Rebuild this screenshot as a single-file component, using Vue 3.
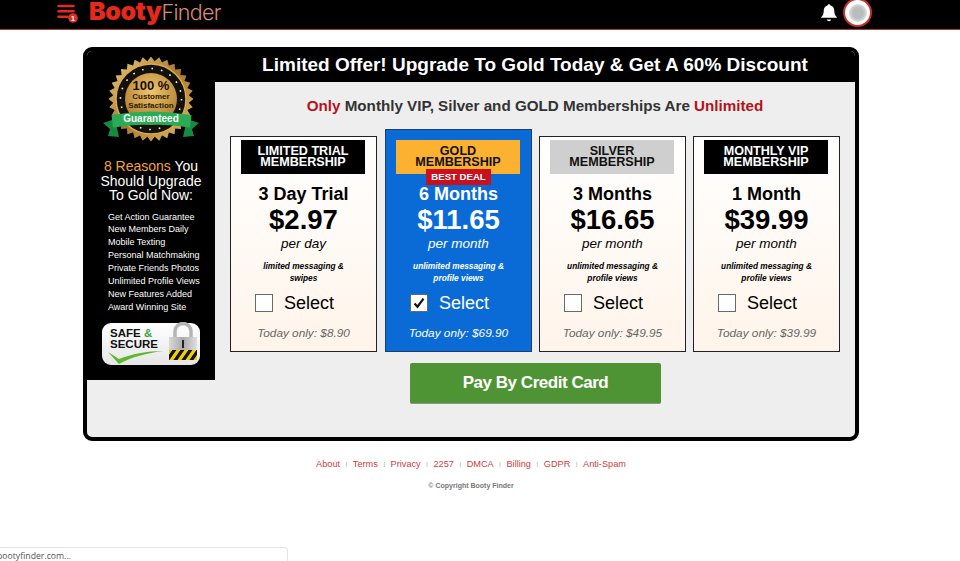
<template>
  <div class="page">
    <header class="topbar">
      <div class="brand">
        <span class="menu-icon">
          <svg width="22" height="20" viewBox="0 0 22 20">
            <path d="M1.500 3h15M1.500 8.300h15M1.500 13.700h9" stroke="#e5291b" stroke-width="2.600" stroke-linecap="round" fill="none" />
            <circle cx="16" cy="15" r="4.800" fill="#d9302a" />
            <text x="16" y="17.500" class="menu-count">1</text>
          </svg>
        </span>
        <span class="logo"><b>Booty</b><i>Finder</i></span>
      </div>
      <div class="user">
        <svg class="bell" width="18" height="19" viewBox="0 0 18 19">
          <path d="M9 1.200c.9 0 1.400.6 1.500 1.300 2.600.6 3.800 2.800 3.800 5.400 0 3 .8 4.600 2.500 6.100v.8H1.200V14c1.700-1.500 2.500-3.100 2.500-6.100 0-2.600 1.200-4.800 3.800-5.400C7.600 1.800 8.100 1.200 9 1.200z" fill="#fff" />
          <path d="M7 16.500h4c0 1-.9 1.700-2 1.700s-2-.7-2-1.700z" fill="#fff" />
        </svg>
        <span class="avatar"><span class="avatar-dot"></span></span>
      </div>
    </header>

    <main class="offer">
      <div class="side-col">
        <aside class="sidebar">
          <svg class="seal" width="100" height="90" viewBox="0 0 100 90">
            <defs>
              <linearGradient id="gold" x1="0" y1="0" x2="1" y2="1">
                <stop offset="0" stop-color="#f0cf7d" />
                <stop offset="0.5" stop-color="#a8772c" />
                <stop offset="1" stop-color="#e8c068" />
              </linearGradient>
              <radialGradient id="core" cx="0.5" cy="0.35" r="0.7">
                <stop offset="0" stop-color="#f0c66d" />
                <stop offset="1" stop-color="#a8762a" />
              </radialGradient>
            </defs>
            <polygon :points="sealPoints" fill="url(#gold)" />
            <circle cx="50" cy="42" r="35" fill="#14110c" stroke="#d9ab55" stroke-width="1.500" />
            <circle cx="50" cy="42" r="30.500" fill="none" stroke="#fff" stroke-width="1.600" stroke-dasharray="1.600 8" />
            <circle cx="50" cy="42" r="26" fill="url(#core)" />
            <text x="50" y="33" class="seal-big">100 %</text>
            <text x="50" y="42" class="seal-small">Customer</text>
            <text x="50" y="50.700" class="seal-small">Satisfaction</text>
            <polygon points="2,66 14,62 18,80 7,79 9,72" fill="#178a41" />
            <polygon points="98,66 86,62 82,80 93,79 91,72" fill="#178a41" />
            <path d="M10.500 58Q50 51 90.500 58L89 70.500Q50 64.500 12 70.500z" fill="#2cab57" />
            <text x="50" y="65" class="seal-ribbon">Guaranteed</text>
          </svg>

          <h2 class="reasons"><span>8 Reasons</span> You Should Upgrade To Gold Now:</h2>
          <ul class="reason-list">
            <li v-for="item in reasons" :key="item">{{ item }}</li>
          </ul>

          <div class="safe">
            <div class="safe-text">
              <div>SAFE <em>&amp;</em></div>
              <div>SECURE</div>
              <svg width="56" height="14" viewBox="0 0 56 14" class="safe-tick">
                <path d="M0 2l11 7C24 4 38 1 56 1 38 3 24 7 11 14z" fill="#5cb82c" />
              </svg>
            </div>
            <svg class="padlock" width="30" height="38" viewBox="0 0 30 38">
              <defs>
                <linearGradient id="steel" x1="0" y1="0" x2="1" y2="0">
                  <stop offset="0" stop-color="#d9d9d9" />
                  <stop offset="0.5" stop-color="#a9a9a9" />
                  <stop offset="1" stop-color="#e0e0e0" />
                </linearGradient>
                <pattern id="hazard" width="8" height="8" patternUnits="userSpaceOnUse" patternTransform="skewX(-35)">
                  <rect width="8" height="8" fill="#efd000" />
                  <rect width="4" height="8" fill="#111" />
                </pattern>
              </defs>
              <path d="M7 16V9.500a8 8 0 0 1 16 0V16" fill="none" stroke="#b5b5b5" stroke-width="3.500" />
              <rect x="1" y="15" width="28" height="23" fill="url(#steel)" />
              <rect x="14" y="18" width="2" height="8" fill="#222" />
              <rect x="1" y="28" width="28" height="10" fill="url(#hazard)" />
            </svg>
          </div>
        </aside>
      </div>

      <section class="content">
        <h1 class="headline">Limited Offer! Upgrade To Gold Today &amp; Get A 60% Discount</h1>
        <p class="subline"><span>Only</span> Monthly VIP, Silver and GOLD Memberships Are <span>Unlimited</span></p>

        <div class="plans">
          <label v-for="plan in plans" :key="plan.name" class="plan" :class="{ selected: plan.selected }">
            <div class="plan-name" :class="plan.tone">{{ plan.name }}<br />MEMBERSHIP</div>
            <span v-if="plan.selected" class="deal">BEST DEAL</span>
            <div class="term">{{ plan.term }}</div>
            <div class="price">{{ plan.price }}</div>
            <div class="per">{{ plan.per }}</div>
            <div class="desc">{{ plan.desc }}<br />{{ plan.desc2 }}</div>
            <div class="pick">
              <span class="box">
                <svg v-if="plan.selected" width="14" height="14" viewBox="0 0 14 14">
                  <path d="M2.500 7.500l3 3.200 6-8" fill="none" stroke="#111" stroke-width="2.200" />
                </svg>
              </span>
              <span class="pick-label">Select</span>
            </div>
            <div class="today">Today only: {{ plan.today }}</div>
          </label>
        </div>

        <button class="pay">Pay By Credit Card</button>
      </section>
    </main>

    <footer class="footer">
      <nav class="links">
        <template v-for="(link, i) in links" :key="link">
          <span v-if="i" class="sep">|</span>
          <a>{{ link }}</a>
        </template>
      </nav>
      <p class="copyright">© Copyright Booty Finder</p>
    </footer>

    <div class="status">bootyfinder.com...</div>
  </div>
</template>

<script setup>
const reasons = [
  'Get Action Guarantee',
  'New Members Daily',
  'Mobile Texting',
  'Personal Matchmaking',
  'Private Friends Photos',
  'Unlimited Profile Views',
  'New Features Added',
  'Award Winning Site'
]

const plans = [
  { name: 'LIMITED TRIAL', tone: 'dark', term: '3 Day Trial', price: '$2.97', per: 'per day', desc: 'limited messaging &', desc2: 'swipes', today: '$8.90' },
  { name: 'GOLD', tone: 'gold', term: '6 Months', price: '$11.65', per: 'per month', desc: 'unlimited messaging &', desc2: 'profile views', today: '$69.90', selected: true },
  { name: 'SILVER', tone: 'silver', term: '3 Months', price: '$16.65', per: 'per month', desc: 'unlimited messaging &', desc2: 'profile views', today: '$49.95' },
  { name: 'MONTHLY VIP', tone: 'dark', term: '1 Month', price: '$39.99', per: 'per month', desc: 'unlimited messaging &', desc2: 'profile views', today: '$39.99' }
]

const links = ['About', 'Terms', 'Privacy', '2257', 'DMCA', 'Billing', 'GDPR', 'Anti-Spam']

// starburst edge of the gold seal
const sealPoints = Array.from({ length: 64 }, (_, i) => {
  const r = i % 2 ? 38 : 42.5
  const a = (i / 64) * Math.PI * 2
  return `${(50 + r * Math.cos(a)).toFixed(1)},${(42 + r * Math.sin(a)).toFixed(1)}`
}).join(' ')
</script>

<style>
html,
body {
  margin: 0;
  background: #fff;
  overflow: hidden;
}
</style>

<style scoped>
.page {
  position: relative;
  height: 561px;
  overflow: hidden;
  font-family: 'Liberation Sans', Arial, sans-serif;
  color: #000;
}

.topbar {
  height: 29px;
  background: #000;
  border-bottom: 1px solid #a5392f;
  display: flex;
  justify-content: space-between;
  padding: 0 88px 0 57px;
  overflow: hidden;
}

.brand {
  display: flex;
  gap: 10px;
  align-items: flex-start;
}

.menu-icon {
  margin-top: 3px;
  height: 20px;
}

.menu-count {
  font: bold 7px 'Liberation Sans', sans-serif;
  fill: #fff;
  text-anchor: middle;
}

.logo {
  font-family: Inter, 'Liberation Sans', sans-serif;
  font-size: 25px;
  line-height: 22px;
  white-space: nowrap;
}

.logo b {
  color: #e5291b;
  font-weight: 900;
  letter-spacing: -0.4px;
}

.logo i {
  color: #d9897a;
  font-style: normal;
  font-size: 21.500px;
  font-weight: 300;
  letter-spacing: -0.7px;
}

.user {
  display: flex;
  align-items: flex-start;
  gap: 5px;
}

.bell {
  margin-top: 3px;
}

.avatar {
  width: 25px;
  height: 25px;
  margin-top: -2px;
  border: 2px solid #c8312a;
  border-radius: 50%;
  background: #fff;
  display: flex;
  align-items: center;
  justify-content: center;
}

.avatar-dot {
  width: 18px;
  height: 18px;
  border-radius: 50%;
  background: radial-gradient(circle, #b9bdbd 0 40%, #dfe2e2 75%, #f4f5f5 100%);
}

.offer {
  width: 768px;
  height: 386px;
  margin: 17px 0 0 83px;
  border: 4px solid #000;
  border-radius: 9px;
  background: #eee;
  display: flex;
  overflow: hidden;
}

.side-col {
  width: 128px;
  flex: none;
}

.sidebar {
  height: 329px;
  background: #000;
  color: #fff;
  display: flex;
  flex-direction: column;
  align-items: center;
  padding-top: 6px;
  box-sizing: border-box;
}

.seal {
  flex: none;
}

.seal-big {
  font: bold 13px 'Liberation Sans', sans-serif;
  fill: #15100a;
  text-anchor: middle;
}

.seal-small {
  font: bold 8px 'Liberation Sans', sans-serif;
  fill: #2a1c08;
  text-anchor: middle;
}

.seal-ribbon {
  font: bold 10px 'Liberation Sans', sans-serif;
  fill: #fff;
  text-anchor: middle;
}

.reasons {
  width: 110px;
  margin: 12px 0 0;
  font-size: 14px;
  font-weight: 400;
  line-height: 14.500px;
  text-align: center;
}

.reasons span {
  color: #f5a33c;
}

.reason-list {
  list-style: none;
  align-self: flex-start;
  margin: 8px 0 0 21px;
  padding: 0;
  font-size: 9px;
  line-height: 12.900px;
}

.safe {
  width: 98px;
  height: 42px;
  margin-top: 9px;
  border-radius: 9px;
  background: linear-gradient(#fff, #e6e6e6);
  display: flex;
  justify-content: space-between;
  align-items: flex-end;
  padding: 0 0 0 6px;
  box-sizing: border-box;
}

.safe-text {
  align-self: flex-start;
  margin: 5px 0 0 2px;
  font-size: 11.500px;
  font-weight: 700;
  line-height: 11px;
  color: #111;
}

.safe-text em {
  color: #37a843;
  font-style: normal;
}

.safe-tick {
  display: block;
  margin: 0 0 0 -2px;
}

.padlock {
  margin: 0 2px 5px 0;
  flex: none;
}

.content {
  flex: 1;
  min-width: 0;
}

.headline {
  margin: 0;
  height: 31px;
  background: #000;
  color: #fff;
  font-size: 19px;
  line-height: 27px;
  text-align: center;
  box-sizing: border-box;
  white-space: nowrap;
}

.subline {
  margin: 15px 0 0;
  font-size: 15.200px;
  font-weight: 700;
  line-height: 18px;
  text-align: center;
  color: #333;
}

.subline span {
  color: #b5121b;
}

.plans {
  display: flex;
  align-items: flex-end;
  gap: 7px;
  margin: 14px 0 0 15px;
}

.plan {
  position: relative;
  width: 147px;
  height: 216px;
  box-sizing: border-box;
  border: 1px solid #222;
  background: linear-gradient(#fff, #fff4ea);
  padding-top: 3px;
  text-align: center;
  display: block;
  flex: none;
}

.plan.selected {
  height: 223px;
  margin-left: 1px;
  padding-top: 10px;
  background: #0b6bd6;
  border-color: #1d3e66;
  color: #fff;
}

.plan-name {
  width: 124px;
  height: 34px;
  margin-left: 10px;
  padding-top: 6px;
  box-sizing: border-box;
  font-size: 12.600px;
  font-weight: 700;
  line-height: 11px;
}

.plan-name.dark {
  background: #000;
  color: #fff;
}

.plan-name.gold {
  background: #fdb130;
  color: #111;
}

.plan-name.silver {
  background: #cfcfcf;
  color: #111;
}

.deal {
  position: absolute;
  left: 40px;
  top: 39px;
  width: 65px;
  height: 16px;
  background: #c8101e;
  color: #fff;
  font-size: 9.600px;
  font-weight: 700;
  line-height: 15px;
}

.term {
  margin-top: 10px;
  font-size: 18px;
  font-weight: 700;
  line-height: 21px;
}

.price {
  font-size: 27.500px;
  font-weight: 700;
  line-height: 30px;
}

.per {
  font-size: 13.500px;
  font-style: italic;
  line-height: 17px;
}

.desc {
  margin-top: 9px;
  font-size: 8.300px;
  font-style: italic;
  font-weight: 700;
  line-height: 11.500px;
}

.pick {
  display: flex;
  align-items: center;
  margin: 9px 0 0 24px;
  height: 20px;
}

.box {
  width: 18px;
  height: 18px;
  box-sizing: border-box;
  border: 1px solid #5d6f66;
  background: #fff;
  display: flex;
  align-items: center;
  justify-content: center;
  flex: none;
}

.pick-label {
  margin-left: 11px;
  font-size: 18px;
  line-height: 20px;
}

.today {
  margin-top: 13px;
  font-size: 11.800px;
  font-style: italic;
  line-height: 15px;
  color: #666;
}

.selected .today {
  color: #fff;
}

.pay {
  display: block;
  width: 251px;
  height: 41px;
  margin: 11px 0 0 195px;
  border: 0;
  border-bottom: 1px solid #8a9a86;
  border-radius: 2px;
  background: #4f9434;
  color: #fff;
  font-family: inherit;
  font-size: 17px;
  font-weight: 700;
  letter-spacing: -0.47px;
  padding: 0;
}

.footer {
  text-align: center;
  padding-right: 18px;
}

.links {
  margin-top: 17px;
  height: 12px;
  display: flex;
  justify-content: center;
  align-items: center;
  gap: 5.600px;
  font-size: 9.200px;
  line-height: 12px;
  color: #d0403a;
}

.sep {
  color: #999;
  font-size: 6px;
}

.copyright {
  margin: 11px 0 0;
  font-size: 7px;
  font-weight: 700;
  line-height: 10px;
  color: #777;
}

.status {
  position: absolute;
  left: -8px;
  bottom: -2px;
  width: 296px;
  height: 16px;
  box-sizing: border-box;
  padding: 1px 0 0 4px;
  border: 1px solid #e4e4e4;
  border-radius: 3px 3px 0 0;
  background: #fff;
  font-family: 'Open Sans', sans-serif;
  font-size: 8.700px;
  line-height: 14px;
  color: #555;
}
</style>
